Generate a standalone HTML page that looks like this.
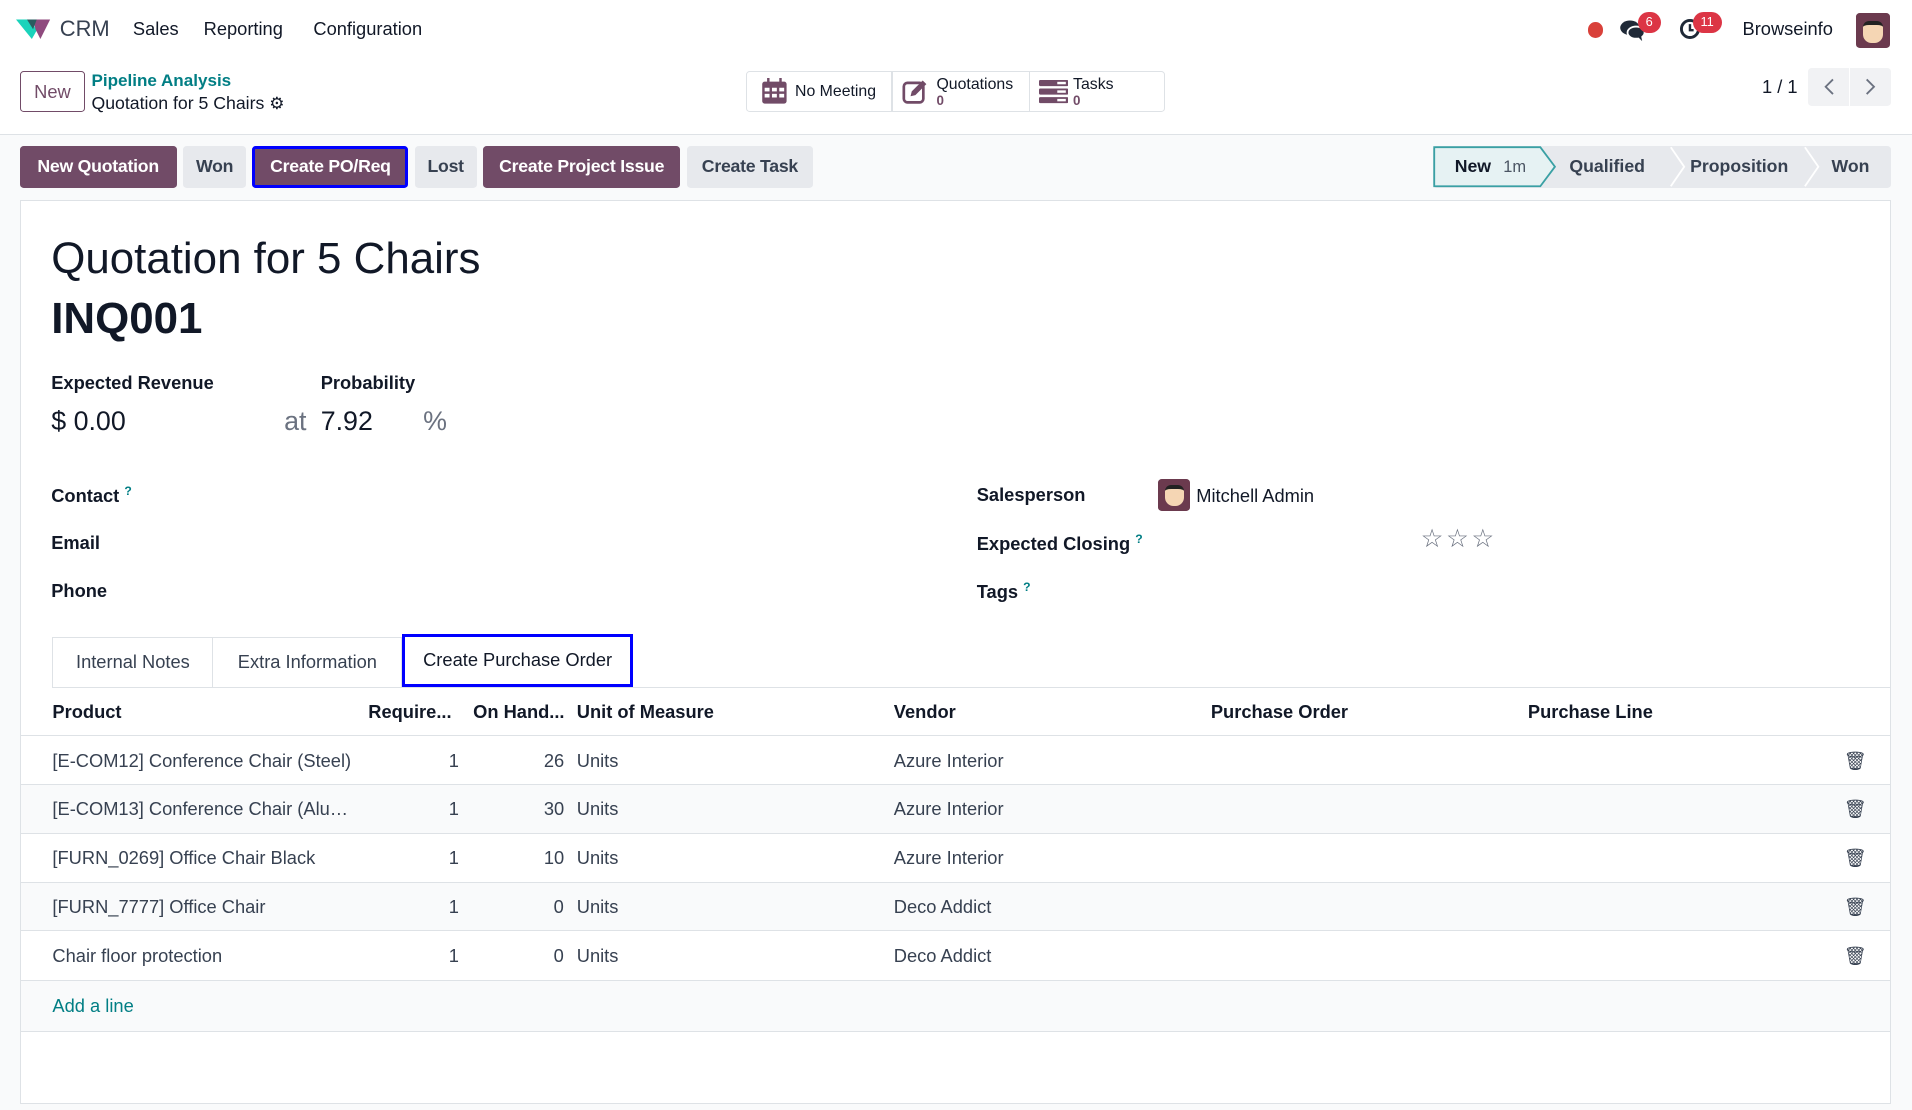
<!DOCTYPE html>
<html><head><meta charset="utf-8"><style>
html,body{margin:0;padding:0;width:1912px;height:1110px;overflow:hidden;background:#fff}
#w{zoom:1.219388;width:1568px;height:910px;position:relative;font-family:"Liberation Sans",sans-serif;color:#374151;font-size:15px;background:#f9fafb}
.a{position:absolute;white-space:nowrap}
.top{position:absolute;left:0;top:0;width:1568px;height:110px;background:#fff;border-bottom:1px solid #dee2e6}
.btn{position:absolute;top:120px;height:34px;line-height:34px;border-radius:3px;padding:0;text-align:center;white-space:nowrap;font-size:14.5px;font-weight:bold;box-sizing:border-box;letter-spacing:-0.2px}
.p{background:#714b67;color:#fff}.s{background:#e7e9ed;color:#374151}
.sheet{position:absolute;left:16px;top:164px;width:1535px;height:741px;background:#fff;border:1px solid #dee2e6;box-sizing:border-box}
.lbl{font-weight:bold;color:#111827}
.row{position:absolute;left:17px;width:1533px;height:40px;border-top:1px solid #dee2e6;box-sizing:border-box}
.row span{position:absolute;top:11px}
.q{color:#017e84;font-size:10px;vertical-align:super}
</style></head><body><div id="w">
<div class="top"></div>
<svg class="a" style="left:13px;top:14px" width="29" height="20" viewBox="0 0 29 20"><path d="M0 2h12l5 9-4 7z" fill="#1ad3bb"/><path d="M14 2h14l-8 16-4-8z" fill="#8f4a7e"/><path d="M9 2h8l-3 8z" fill="#2a5c60"/></svg>
<div class="a" style="left:49px;top:13px;font-size:18px;color:#374151">CRM</div>
<div class="a" style="left:109px;top:15px;font-size:15px;color:#111827">Sales</div>
<div class="a" style="left:167px;top:15px;font-size:15px;color:#111827">Reporting</div>
<div class="a" style="left:257px;top:15px;font-size:15px;color:#111827">Configuration</div>
<div class="a" style="left:1302px;top:18px;width:13px;height:13px;border-radius:50%;background:#d9413a"></div>
<svg class="a" style="left:1328px;top:15px" width="22" height="20" viewBox="0 0 22 20"><ellipse cx="9" cy="8" rx="8" ry="6" fill="#1f2937"/><ellipse cx="14" cy="12" rx="7" ry="5" fill="#1f2937" stroke="#fff" stroke-width="1.5"/><path d="M15 15l4 4-1-5z" fill="#1f2937"/></svg>
<div class="a" style="left:1343px;top:10px;width:19px;height:17px;border-radius:9px;background:#dc3545;color:#fff;font-size:10.5px;text-align:center;line-height:17px">6</div>
<svg class="a" style="left:1377px;top:15px" width="18" height="18" viewBox="0 0 18 18"><circle cx="9" cy="9" r="7" fill="none" stroke="#1f2937" stroke-width="2.4"/><path d="M9 5v5h3" stroke="#1f2937" stroke-width="2" fill="none"/></svg>
<div class="a" style="left:1388px;top:10px;width:24px;height:17px;border-radius:9px;background:#dc3545;color:#fff;font-size:10.5px;text-align:center;line-height:17px">11</div>
<div class="a" style="left:1429px;top:15px;font-size:15px;color:#111827">Browseinfo</div>
<div class="a" style="left:1522px;top:11px;width:28px;height:28px;border-radius:3px;background:#6b3a4e"><div style="margin:6px 6px;width:16px;height:18px;background:#f5d6b4;border-radius:5px 5px 7px 7px;border-top:4px solid #222;box-sizing:border-box"></div></div>

<div class="a" style="left:16px;top:58px;width:54px;height:34px;border:1px solid #714b67;border-radius:3px;box-sizing:border-box;text-align:center;line-height:32px;color:#714b67;font-size:15px">New</div>
<div class="a" style="left:75px;top:58px;color:#017e84;font-weight:bold;font-size:14px">Pipeline Analysis</div>
<div class="a" style="left:75px;top:76px;color:#111827;font-size:14.5px">Quotation for 5 Chairs <span style="font-size:14px">⚙</span></div>

<div class="a" style="left:612px;top:58px;width:343px;height:34px;border:1px solid #dee2e6;border-radius:3px;box-sizing:border-box"></div>
<div class="a" style="left:731px;top:58px;width:1px;height:34px;background:#dee2e6"></div>
<div class="a" style="left:844px;top:58px;width:1px;height:34px;background:#dee2e6"></div>
<svg class="a" style="left:624px;top:64px" width="22" height="22" viewBox="0 0 22 22"><rect x="1" y="3" width="20" height="18" rx="2" fill="#714b67"/><g fill="#fff"><rect x="3" y="8" width="4" height="3"/><rect x="9" y="8" width="4" height="3"/><rect x="15" y="8" width="4" height="3"/><rect x="3" y="13" width="4" height="3"/><rect x="9" y="13" width="4" height="3"/><rect x="15" y="13" width="4" height="3"/></g><rect x="5" y="0" width="2" height="5" fill="#714b67"/><rect x="15" y="0" width="2" height="5" fill="#714b67"/></svg>
<div class="a" style="left:652px;top:68px;font-size:13px;color:#111827">No Meeting</div>
<svg class="a" style="left:740px;top:64px" width="24" height="22" viewBox="0 0 24 22"><rect x="1.5" y="4" width="16" height="16" rx="3" fill="none" stroke="#714b67" stroke-width="2.2"/><path d="M7 15l1-4 9-9 3 3-9 9z" fill="#714b67"/></svg>
<div class="a" style="left:768px;top:62px;font-size:13px;color:#111827">Quotations</div>
<div class="a" style="left:768px;top:76px;font-size:11px;color:#714b67;font-weight:bold">0</div>
<svg class="a" style="left:852px;top:66px" width="24" height="20" viewBox="0 0 24 20"><rect x="0" y="0" width="24" height="5" rx="1" fill="#714b67"/><rect x="0" y="7" width="24" height="5" rx="1" fill="#714b67"/><rect x="0" y="14" width="24" height="5" rx="1" fill="#714b67"/><g fill="#fff"><rect x="15" y="1.5" width="7" height="2"/><rect x="15" y="8.5" width="7" height="2"/><rect x="15" y="15.5" width="7" height="2"/></g></svg>
<div class="a" style="left:880px;top:62px;font-size:13px;color:#111827">Tasks</div>
<div class="a" style="left:880px;top:76px;font-size:11px;color:#714b67;font-weight:bold">0</div>

<div class="a" style="left:1445px;top:62px;font-size:15px;color:#111827">1 / 1</div>
<div class="a" style="left:1483px;top:56px;width:68px;height:31px;background:#f1f2f4;border-radius:3px"></div>
<div class="a" style="left:1516px;top:56px;width:1px;height:31px;background:#fff"></div>
<svg class="a" style="left:1494px;top:63px" width="12" height="16"><path d="M9 2L3 8l6 6" fill="none" stroke="#6b7280" stroke-width="1.5"/></svg>
<svg class="a" style="left:1528px;top:63px" width="12" height="16"><path d="M3 2l6 6-6 6" fill="none" stroke="#6b7280" stroke-width="1.5"/></svg>

<div class="btn p" style="left:16px;width:129px">New Quotation</div>
<div class="btn s" style="left:150px;width:52px">Won</div>
<div class="btn p" style="left:207px;width:128px;border:3px solid #0000ff;line-height:28px">Create PO/Req</div>
<div class="btn s" style="left:340px;width:51px">Lost</div>
<div class="btn p" style="left:396px;width:162px">Create Project Issue</div>
<div class="btn s" style="left:563px;width:104px">Create Task</div>

<div class="a" style="left:1175px;top:120px;width:376px;height:34px;background:#e7e9ed;border-radius:3px"></div>
<svg class="a" style="left:1175px;top:120px" width="376" height="34"><path d="M1 1H88L100 17 88 33H1Z" fill="#e6f2f3" stroke="#3aa0a4" stroke-width="1.5"/><path d="M195 1l11 16-11 16M305 1l11 16-11 16" fill="none" stroke="#fff" stroke-width="1.5"/></svg>
<div class="a" style="left:1193px;top:128px;font-size:14.5px;font-weight:bold;color:#111827">New <span style="font-weight:normal;color:#4b5563;font-size:13.5px;margin-left:6px">1m</span></div>
<div class="a" style="left:1287px;top:128px;font-size:14.5px;font-weight:bold;color:#374151">Qualified</div>
<div class="a" style="left:1386px;top:128px;font-size:14.5px;font-weight:bold;color:#374151">Proposition</div>
<div class="a" style="left:1502px;top:128px;font-size:14.5px;font-weight:bold;color:#374151">Won</div>

<div class="sheet"></div>
<div class="a" style="left:42px;top:192px;font-size:36px;color:#111827">Quotation for 5 Chairs</div>
<div class="a" style="left:42px;top:241px;font-size:36px;font-weight:bold;color:#111827">INQ001</div>
<div class="a lbl" style="left:42px;top:305px">Expected Revenue</div>
<div class="a lbl" style="left:263px;top:305px">Probability</div>
<div class="a" style="left:42px;top:333px;font-size:22px;color:#111827">$ 0.00</div>
<div class="a" style="left:233px;top:333px;font-size:22px;color:#6b7280">at</div>
<div class="a" style="left:263px;top:333px;font-size:22px;color:#111827">7.92</div>
<div class="a" style="left:347px;top:333px;font-size:22px;color:#6b7280">%</div>

<div class="a lbl" style="left:42px;top:397px">Contact <span class="q">?</span></div>
<div class="a lbl" style="left:42px;top:436px">Email</div>
<div class="a lbl" style="left:42px;top:476px">Phone</div>
<div class="a lbl" style="left:801px;top:397px">Salesperson</div>
<div class="a lbl" style="left:801px;top:436px">Expected Closing <span class="q">?</span></div>
<div class="a lbl" style="left:801px;top:476px">Tags <span class="q">?</span></div>
<div class="a" style="left:950px;top:393px;width:26px;height:26px;border-radius:3px;background:#6b3a4e"><div style="margin:5px;width:16px;height:17px;background:#f5d6b4;border-radius:5px 5px 7px 7px;border-top:4px solid #222;box-sizing:border-box"></div></div>
<div class="a" style="left:981px;top:398px;color:#111827">Mitchell Admin</div>
<div class="a" style="left:1165px;top:430px;font-size:21px;color:#6b7280;letter-spacing:2px">☆☆☆</div>

<div class="a" style="left:43px;top:522px;width:1508px;height:41px;border-bottom:1px solid #dee2e6"></div>
<div class="a" style="left:43px;top:522px;width:132px;height:41px;border:1px solid #dee2e6;border-bottom:none;box-sizing:border-box;text-align:center;line-height:40px">Internal Notes</div>
<div class="a" style="left:175px;top:522px;width:155px;height:41px;border:1px solid #dee2e6;border-left:none;border-bottom:none;box-sizing:border-box;text-align:center;line-height:40px">Extra Information</div>
<div class="a" style="left:330px;top:520px;width:189px;height:43px;border:3px solid #0000ff;box-sizing:border-box;text-align:center;line-height:37px;color:#111827;background:#fff">Create Purchase Order</div>

<div class="a lbl" style="left:43px;top:575px">Product</div>
<div class="a lbl" style="left:302px;top:575px">Require...</div>
<div class="a lbl" style="left:388px;top:575px">On Hand...</div>
<div class="a lbl" style="left:473px;top:575px">Unit of Measure</div>
<div class="a lbl" style="left:733px;top:575px">Vendor</div>
<div class="a lbl" style="left:993px;top:575px">Purchase Order</div>
<div class="a lbl" style="left:1253px;top:575px">Purchase Line</div>

<div class="row" style="top:603px;background:#fff"><span style="left:26px">[E-COM12] Conference Chair (Steel)</span><span style="left:351px">1</span><span style="left:429px">26</span><span style="left:456px">Units</span><span style="left:716px">Azure Interior</span><span style="left:1495px">🗑</span></div>
<div class="row" style="top:643px;background:#f9fafb"><span style="left:26px">[E-COM13] Conference Chair (Alu…</span><span style="left:351px">1</span><span style="left:429px">30</span><span style="left:456px">Units</span><span style="left:716px">Azure Interior</span><span style="left:1495px">🗑</span></div>
<div class="row" style="top:683px;background:#fff"><span style="left:26px">[FURN_0269] Office Chair Black</span><span style="left:351px">1</span><span style="left:429px">10</span><span style="left:456px">Units</span><span style="left:716px">Azure Interior</span><span style="left:1495px">🗑</span></div>
<div class="row" style="top:723px;background:#f9fafb"><span style="left:26px">[FURN_7777] Office Chair</span><span style="left:351px">1</span><span style="left:437px">0</span><span style="left:456px">Units</span><span style="left:716px">Deco Addict</span><span style="left:1495px">🗑</span></div>
<div class="row" style="top:763px;background:#fff"><span style="left:26px">Chair floor protection</span><span style="left:351px">1</span><span style="left:437px">0</span><span style="left:456px">Units</span><span style="left:716px">Deco Addict</span><span style="left:1495px">🗑</span></div>
<div class="row" style="top:804px;background:#f9fafb;border-bottom:1px solid #dee2e6;height:42px"><span style="left:26px;color:#017e84">Add a line</span></div>
</div></body></html>
